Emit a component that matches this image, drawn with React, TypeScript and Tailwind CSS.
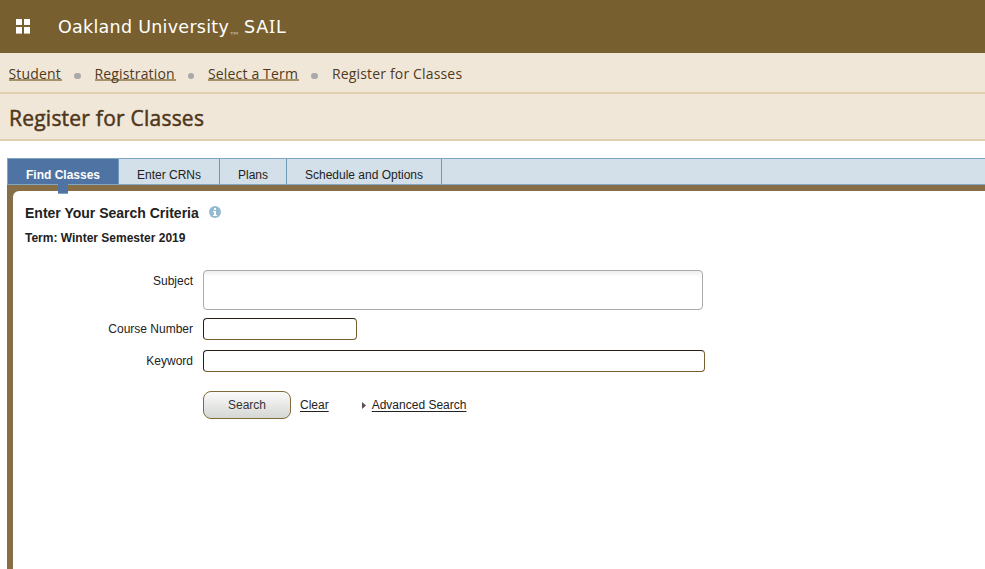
import React from "react";

const crumbs = [
  { label: "Student", width: "w-[53.5px]" },
  { label: "Registration", width: "w-[81px]" },
  { label: "Select a Term", width: "w-[91px]" },
];

const tabs = [
  { label: "Enter CRNs", width: "w-[101px]" },
  { label: "Plans", width: "w-[67px]" },
  { label: "Schedule and Options", width: "w-[155px]" },
];

function Header() {
  return (
    <header className="flex h-[53px] items-start bg-[#785f2f] text-white">
      <button aria-label="Menu" className="mt-[19px] ml-4 grid w-[14px] grid-cols-2 gap-x-[2px] gap-y-[2px]">
        <span className="h-[6px] bg-white" />
        <span className="h-[6px] bg-white" />
        <span className="h-[7px] border-b border-[#c9bfac] bg-white" />
        <span className="h-[7px] border-b border-[#c9bfac] bg-white" />
      </button>
      <div className="ml-7 flex whitespace-nowrap font-['DejaVu_Sans',sans-serif] text-[17.5px] leading-[22px]">
        <span className="mt-4 w-[171px] tracking-[0.27px]">Oakland University</span>
        <span className="mt-[26px] w-[15px] text-[11px] leading-[22px] text-[#c2b6a0]">™</span>
        <span className="mt-[15px] tracking-[0.8px]">
          SA<span className="font-['Noto_Sans',sans-serif] text-[18px]">I</span>L
        </span>
      </div>
    </header>
  );
}

function Breadcrumbs() {
  return (
    <nav className="flex h-[41px] items-start border-b-2 border-[#e1d0ae] bg-[#f1e7d9] pt-[11px] pl-[8.5px] font-['Open_Sans',sans-serif] text-sm leading-5 tracking-[0.16px] whitespace-nowrap text-[#4f3a1c]">
      {crumbs.map((c) => (
        <React.Fragment key={c.label}>
          <a className={`${c.width} h-[17px] border-b-2 border-[#a5926b] leading-5`}>{c.label}</a>
          <span className="mt-[8.5px] mr-[14px] ml-3 h-[6px] w-[6.5px] rounded-full bg-[#a9a9a9]" />
        </React.Fragment>
      ))}
      <span className="ml-[0.5px]">Register for Classes</span>
    </nav>
  );
}

function Tabs() {
  return (
    <div className="flex h-[27px] border-y border-l border-[#7fa6c3] bg-[#d4e0e9] text-xs leading-[32px] text-[#222]">
      <div className="relative w-[111px] border-r border-[#6f99b9] bg-[#4f74a3] text-center font-bold text-white">
        Find Classes
        <span className="absolute top-[25px] left-[50px] h-[10px] w-[10px] border-b border-[#7fa6c3] bg-[#4f74a3]" />
      </div>
      {tabs.map((t) => (
        <div key={t.label} className={`${t.width} border-r border-[#6f99b9] text-center whitespace-nowrap`}>
          {t.label}
        </div>
      ))}
    </div>
  );
}

function SearchForm() {
  return (
    <form className="mt-6 text-xs leading-4">
      <div className="flex h-12">
        <label className="mt-[3px] w-[180px] text-right">Subject</label>
        <div className="ml-[10px] h-10 w-[500px] rounded-[4px] border border-[#aaa] bg-linear-to-b from-[#eee] to-white to-15%" />
      </div>
      <div className="flex h-8">
        <label className="mt-[3px] w-[180px] text-right">Course Number</label>
        <input className="ml-[10px] h-[22px] w-[154px] rounded-[4px] border border-t-[#2a2112] border-r-[#785f2f] border-b-[#785f2f] border-l-[#2a2112]" />
      </div>
      <div className="flex h-[41px]">
        <label className="mt-[3px] w-[180px] text-right">Keyword</label>
        <input className="ml-[10px] h-[22px] w-[502px] rounded-[4px] border border-t-[#2a2112] border-r-[#785f2f] border-b-[#785f2f] border-l-[#2a2112]" />
      </div>
      <div className="ml-[190px] flex h-7 items-center">
        <button type="button" className="h-7 w-[88px] rounded-[8px] border border-[#82693a] bg-linear-to-b from-[#fafafa] to-[#d5d7d4] text-[#333]">
          Search
        </button>
        <a className="ml-[9px] underline underline-offset-2">Clear</a>
        <svg className="mt-px ml-[33px]" width="4" height="7" viewBox="0 0 4 7">
          <path d="M0 0 L4 3.5 L0 7Z" fill="#5f4a57" />
        </svg>
        <a className="ml-[6px] underline underline-offset-2">Advanced Search</a>
      </div>
    </form>
  );
}

export default function App() {
  return (
    <div className="flex h-[569px] w-[985px] flex-col overflow-hidden bg-white font-['Liberation_Sans',Arial,sans-serif] text-[#222]">
      <Header />
      <Breadcrumbs />
      <h1 className="h-[47px] border-b-2 border-[#e1d0ae] bg-[#f1e7d9] pt-[10px] pl-[9px] font-['Open_Sans',sans-serif] text-[21px] leading-7 font-normal tracking-[0.23px] text-[#4f371c] [-webkit-text-stroke:0.5px_#4f371c]">
        Register for Classes
      </h1>
      <div className="mt-[17px] ml-[7px] flex grow flex-col">
        <Tabs />
        <main className="grow bg-[#866f46] pt-[6px] pl-[6px]">
          <section className="h-full rounded-tl-[6px] bg-white pt-[13px]">
            <div className="ml-3 flex h-[18px] items-start">
              <h2 className="w-[184px] text-sm leading-[18px] font-bold whitespace-nowrap">Enter Your Search Criteria</h2>
              <svg width="12" height="12" viewBox="0 0 12 12" className="mt-[2px]">
                <circle cx="6" cy="6" r="6" fill="#94bad0" />
                <path d="M5 2H7V4H5ZM4 5H7V9H8V10H4V9H5V6H4Z" fill="white" />
              </svg>
            </div>
            <p className="mt-[8px] ml-3 h-4 text-xs leading-4 font-bold">Term: Winter Semester 2019</p>
            <SearchForm />
          </section>
        </main>
      </div>
    </div>
  );
}
